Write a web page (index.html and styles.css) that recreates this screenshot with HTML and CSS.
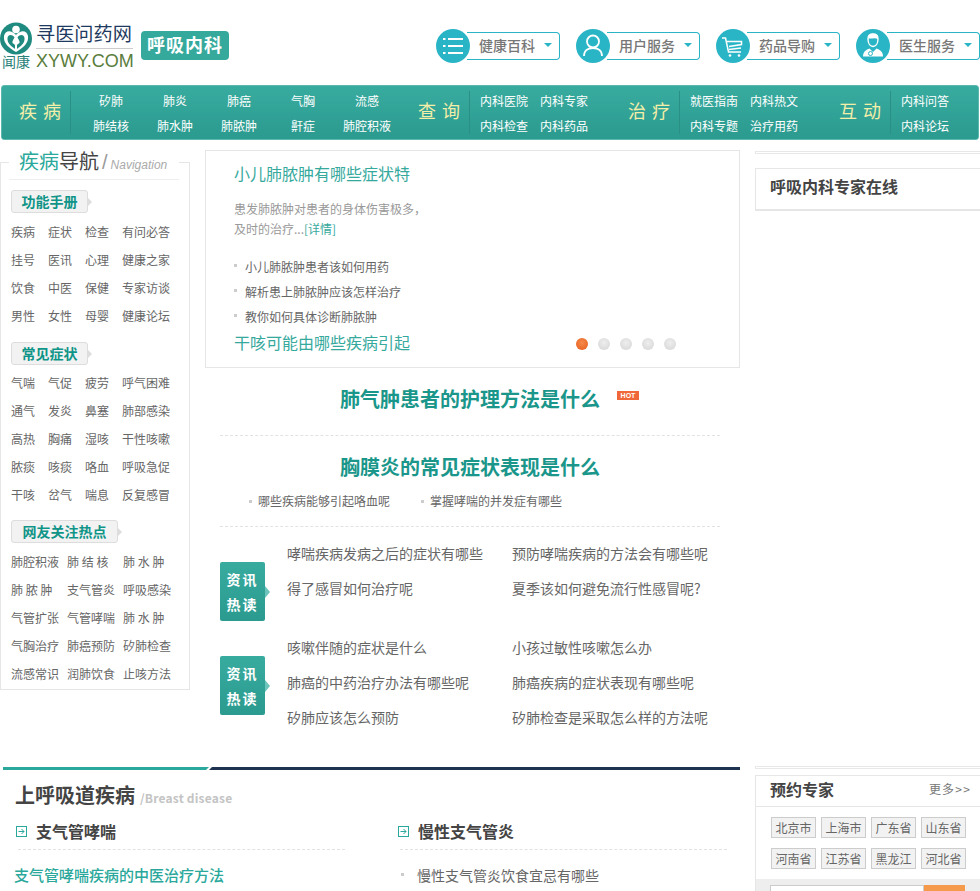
FILE: index.html
```html
<!DOCTYPE html>
<html lang="zh-CN">
<head>
<meta charset="utf-8">
<title>呼吸内科 - 寻医问药网</title>
<link rel="stylesheet" href="styles.css">
</head>
<body>
<header class="header">
  <a class="logo">
    <span class="logo-mark">
      <svg class="logo-icon" viewBox="0 0 32 33"><circle cx="16" cy="16.500" r="16" fill="#1f8a80"/><path d="M16 30C9 26 3 21 4 14C5 8.500 11 7.500 16 13C21 7.500 27 8.500 28 14C29 21 23 26 16 30Z" fill="#fff"/><path d="M15 27C11 24 7 21 7.500 16C8 12.500 12 12 14.500 15.500C13 18 12 20 12.500 21C13.500 22 14.500 22 15 23ZM17 27C21 24 25 21 24.500 16C24 12.500 20 12 17.500 15.500C19 18 20 20 19.500 21C18.500 22 17.500 22 17 23Z" fill="#1f8a80"/><circle cx="16" cy="7.500" r="3.800" fill="#fff"/></svg>
      <span class="logo-wen">闻康</span>
    </span>
    <span class="logo-text">
      <span class="logo-cn">寻医问药网</span>
      <span class="logo-en">XYWY.COM</span>
    </span>
  </a>
  <div class="badge">呼吸内科</div>
  <nav class="services">
    <a class="service">
      <span class="service-icon"><svg viewBox="0 0 34 34"><path d="M7 10h2.500M12 10h15M7 17h2.500M12 17h15M7 24h2.500M12 24h15" stroke="#fff" stroke-width="2" fill="none"/></svg></span>
      <span class="service-pill">健康百科<i class="caret"></i></span>
    </a>
    <a class="service">
      <span class="service-icon"><svg viewBox="0 0 34 34"><circle cx="17" cy="12.500" r="6" stroke="#fff" stroke-width="1.800" fill="none"/><path d="M8 27C8 21.500 12 19 17 19C22 19 26 21.500 26 27" stroke="#fff" stroke-width="1.800" fill="none"/></svg></span>
      <span class="service-pill">用户服务<i class="caret"></i></span>
    </a>
    <a class="service">
      <span class="service-icon"><svg viewBox="0 0 34 34"><path d="M6 9H9.500L12.500 23H25M10.500 12.500H25.500V15.500L13 17.500M13 20.500L25 19" stroke="#fff" stroke-width="1.500" fill="none"/><circle cx="14" cy="26.500" r="1.300" fill="#fff"/><circle cx="23" cy="26.500" r="1.300" fill="#fff"/></svg></span>
      <span class="service-pill">药品导购<i class="caret"></i></span>
    </a>
    <a class="service">
      <span class="service-icon"><svg viewBox="0 0 34 34"><path d="M12 10C12 6 14.500 5 17 5C19.500 5 22 6 22 10C22 15 19.500 17.500 17 17.500C14.500 17.500 12 15 12 10Z" fill="none" stroke="#fff" stroke-width="1.400"/><path d="M12 9.500C15 10 19 8.500 22 10L21.500 6L17 4.500L12.500 6Z" fill="#fff"/><path d="M7 27.500C7 22.500 10.500 20.500 13.500 19.500L17 23L20.500 19.500C23.500 20.500 27 22.500 27 27.500Z" fill="#fff"/><circle cx="14.500" cy="24.500" r="2" fill="none" stroke="#2ab5c6"/></svg></span>
      <span class="service-pill">医生服务<i class="caret"></i></span>
    </a>
  </nav>
</header>

<nav class="channel">
  <div class="group group-a">
    <div class="group-label">疾 病</div>
    <div class="links links-5">
      <a>矽肺</a><a>肺炎</a><a>肺癌</a><a>气胸</a><a>流感</a>
      <a>肺结核</a><a>肺水肿</a><a>肺脓肿</a><a>鼾症</a><a>肺腔积液</a>
    </div>
  </div>
  <div class="group group-b">
    <div class="group-label">查 询</div>
    <div class="links links-2">
      <a>内科医院</a><a>内科专家</a><a>内科检查</a><a>内科药品</a>
    </div>
  </div>
  <div class="group group-c">
    <div class="group-label">治 疗</div>
    <div class="links links-2">
      <a>就医指南</a><a>内科热文</a><a>内科专题</a><a>治疗用药</a>
    </div>
  </div>
  <div class="group group-d">
    <div class="group-label">互 动</div>
    <div class="links links-1">
      <a>内科问答</a><a>内科论坛</a>
    </div>
  </div>
</nav>

<main class="main">
  <aside class="side">
    <h2 class="side-title"><span class="side-teal">疾病</span>导航<span class="side-slash">/</span><em class="side-en">Navigation</em></h2>
    <div class="side-body">
      <h3 class="tag">功能手册</h3>
      <div class="side-links">
        <a>疾病</a><a>症状</a><a>检查</a><a>有问必答</a>
        <a>挂号</a><a>医讯</a><a>心理</a><a>健康之家</a>
        <a>饮食</a><a>中医</a><a>保健</a><a>专家访谈</a>
        <a>男性</a><a>女性</a><a>母婴</a><a>健康论坛</a>
      </div>
      <h3 class="tag">常见症状</h3>
      <div class="side-links side-links-5">
        <a>气喘</a><a>气促</a><a>疲劳</a><a>呼气困难</a>
        <a>通气</a><a>发炎</a><a>鼻塞</a><a>肺部感染</a>
        <a>高热</a><a>胸痛</a><a>湿咳</a><a>干性咳嗽</a>
        <a>脓痰</a><a>咳痰</a><a>咯血</a><a>呼吸急促</a>
        <a>干咳</a><a>岔气</a><a>喘息</a><a>反复感冒</a>
      </div>
      <h3 class="tag tag-wide">网友关注热点</h3>
      <div class="side-links side-links-3">
        <a>肺腔积液</a><a>肺 结 核</a><a>肺 水 肿</a>
        <a>肺 脓 肿</a><a>支气管炎</a><a>呼吸感染</a>
        <a>气管扩张</a><a>气管哮喘</a><a>肺 水 肿</a>
        <a>气胸治疗</a><a>肺癌预防</a><a>矽肺检查</a>
        <a>流感常识</a><a>润肺饮食</a><a>止咳方法</a>
      </div>
    </div>
  </aside>

  <section class="center">
    <div class="focus">
      <h3 class="focus-title">小儿肺脓肿有哪些症状特</h3>
      <p class="focus-desc">患发肺脓肿对患者的身体伤害极多，<br>及时的治疗...<a class="more">[详情]</a></p>
      <ul class="focus-list">
        <li>小儿肺脓肿患者该如何用药</li>
        <li>解析患上肺脓肿应该怎样治疗</li>
        <li>教你如何具体诊断肺脓肿</li>
      </ul>
      <div class="focus-foot">
        <h3 class="focus-title">干咳可能由哪些疾病引起</h3>
        <div class="dots"><i class="dot dot-on"></i><i class="dot"></i><i class="dot"></i><i class="dot"></i><i class="dot"></i></div>
      </div>
    </div>
    <div class="news">
      <div class="headline headline-first">
        <h2>肺气肿患者的护理方法是什么</h2><span class="hot">HOT</span>
      </div>
      <div class="headline headline-second"><h2>胸膜炎的常见症状表现是什么</h2></div>
      <div class="sublinks"><a>哪些疾病能够引起咯血呢</a><a>掌握哮喘的并发症有哪些</a></div>
      <div class="reads">
        <div class="tag-read">资讯<br>热读</div>
        <div class="read-links">
          <a>哮喘疾病发病之后的症状有哪些</a><a>预防哮喘疾病的方法会有哪些呢</a>
          <a>得了感冒如何治疗呢</a><a>夏季该如何避免流行性感冒呢?</a>
        </div>
      </div>
      <div class="reads">
        <div class="tag-read">资讯<br>热读</div>
        <div class="read-links">
          <a>咳嗽伴随的症状是什么</a><a>小孩过敏性咳嗽怎么办</a>
          <a>肺癌的中药治疗办法有哪些呢</a><a>肺癌疾病的症状表现有哪些呢</a>
          <a>矽肺应该怎么预防</a><a>矽肺检查是采取怎么样的方法呢</a>
        </div>
      </div>
    </div>
  </section>

  <aside class="right">
    <div class="thin-line"></div>
    <div class="online">呼吸内科专家在线</div>
  </aside>
</main>

<section class="lower">
  <div class="disease">
    <div class="rule"><span class="rule-teal"></span><span class="rule-navy"></span></div>
    <h2 class="disease-title">上呼吸道疾病<span class="disease-en">/Breast disease</span></h2>
    <div class="disease-cols">
      <div class="disease-col">
        <h3 class="col-title"><svg class="col-icon" viewBox="0 0 11 11"><rect x=".5" y=".5" width="10" height="10" fill="none" stroke="#2aa89b"/><path d="M2.500 5.500H8M5.500 3L8 5.500L5.500 8" fill="none" stroke="#2aa89b"/></svg>支气管哮喘</h3>
        <a class="col-lead">支气管哮喘疾病的中医治疗方法</a>
      </div>
      <div class="disease-col">
        <h3 class="col-title"><svg class="col-icon" viewBox="0 0 11 11"><rect x=".5" y=".5" width="10" height="10" fill="none" stroke="#2aa89b"/><path d="M2.500 5.500H8M5.500 3L8 5.500L5.500 8" fill="none" stroke="#2aa89b"/></svg>慢性支气管炎</h3>
        <a class="col-item">慢性支气管炎饮食宜忌有哪些</a>
      </div>
    </div>
  </div>
  <aside class="booking">
    <div class="thin-line"></div>
    <div class="book-box">
      <div class="book-head"><h3>预约专家</h3><a>更多&gt;&gt;</a></div>
      <div class="book-tags">
        <a>北京市</a><a>上海市</a><a>广东省</a><a>山东省</a>
        <a>河南省</a><a>江苏省</a><a>黑龙江</a><a>河北省</a>
      </div>
      <div class="book-search"><span class="book-input"></span><span class="book-btn"></span></div>
    </div>
  </aside>
</section>
</body>
</html>
```
FILE: styles.css
```css
* { box-sizing: border-box; }
html, body { margin: 0; padding: 0; }
body {
  width: 980px;
  height: 891px;
  overflow: hidden;
  background: #fff;
  color: #666;
  font: 12px/1.5 "Noto Sans CJK SC", "Liberation Sans", sans-serif;
}
h2, h3, p, ul { margin: 0; padding: 0; }
ul { list-style: none; }
em { font-style: italic; }

/* header */
.header { display: flex; height: 85px; }
.logo { display: flex; width: 141px; padding-top: 22px; }
.logo-mark { display: flex; flex-direction: column; align-items: center; width: 36px; padding-right: 4px; }
.logo-icon { width: 32px; height: 33px; display: block; }
.logo-wen { font-size: 14px; line-height: 16px; color: #2a7f78; margin-top: -2px; white-space: nowrap; }
.logo-text { display: flex; flex-direction: column; width: 97px; }
.logo-cn { font-size: 19.200px; line-height: 23px; color: #1e3a5f; height: 27px; border-bottom: 1px solid #ccc; white-space: nowrap; }
.logo-en { font: 18px/25px "Liberation Sans", sans-serif; color: #5a7d3c; white-space: nowrap; }
.badge {
  width: 88px; height: 29px; margin-top: 31px;
  background: #36a99d; border-radius: 4px;
  color: #fff; font-size: 18px; font-weight: 700; line-height: 27px; letter-spacing: 1px; text-align: center;
}
.services { display: flex; gap: 16px; margin-left: 207px; }
.service { display: flex; width: 124px; height: 34px; margin-top: 29px; }
.service-icon { position: relative; z-index: 1; width: 34px; height: 34px; border-radius: 50%; background: #2ab5c6; flex: none; }
.service-icon svg { display: block; width: 34px; height: 34px; }
.service-pill {
  display: flex; align-items: center;
  width: 93px; height: 28px; margin: 3px 0 0 -3px; padding: 0 0 2px 12px;
  border: 1px solid #2ab5c6; border-left: 0; border-radius: 0 4px 4px 0;
  font-size: 14px; font-weight: 500; color: #777; white-space: nowrap;
}
.caret { width: 0; height: 0; margin-left: 9px; border: 4px solid transparent; border-top-color: #2ab5c6; border-bottom: 0; }

/* channel */
.channel {
  display: flex; width: 978px; height: 55px; margin-left: 1px;
  background: linear-gradient(#38ab9f, #2b9a8f);
  border: 1px solid #5cb8ae; border-radius: 3px;
}
.group { display: flex; align-items: center; }
.group-label {
  width: 52px; height: 43px; padding-right: 8px;
  border-right: 1px solid #2a9085;
  color: #f3eea8; font-size: 18px; letter-spacing: 1px; line-height: 38px; white-space: nowrap; text-align: right;
}
.group-a { margin-left: 17px; }
.group-b { margin-left: 19px; }
.group-c { margin-left: 28px; }
.group-d { margin-left: 29px; }
.links { display: grid; color: #fff; line-height: 25px; font-size: 12px; white-space: nowrap; }
.links-5 { grid-template-columns: repeat(5, 64px); margin-left: 8px; text-align: center; }
.links-2 { grid-template-columns: 60px 60px; margin-left: 10px; }
.links-1 { grid-template-columns: 60px; margin-left: 10px; }

/* main */
.main { display: grid; grid-template-columns: 190px 535px 225px; column-gap: 15px; height: 616px; padding-top: 10px; }
.side-title {
  position: relative; z-index: 1;
  display: flex; align-items: baseline;
  width: 170px; height: 30px; margin-left: 9px; padding: 0 0 0 10px;
  background: #fff; border-bottom: 1px solid #eee;
  font-size: 20px; font-weight: 400; line-height: 21px; color: #444; white-space: nowrap;
}
.side-teal { color: #2aa89b; }
.side-slash { margin-left: 3px; font: 20px "Liberation Sans", sans-serif; color: #999; }
.side-en { margin-left: 3px; font: italic 12px "Liberation Sans", sans-serif; color: #aaa; }
.side-body { height: 528px; margin-top: -18px; padding: 27px 0 0 10px; border: 1px solid #e6e6e6; }
.tag {
  position: relative; display: block; width: 77px; height: 23px;
  background: #f2f2f2; border: 1px solid #ddd; border-radius: 3px;
  color: #0f9488; font-size: 14px; font-weight: 700; line-height: 21px; text-align: center;
}
.tag-wide { width: 107px; }
.tag::after { content: ""; position: absolute; right: -5px; top: 7px; width: 0; height: 0; border: 4px solid transparent; border-left-color: #ddd; border-right: 0; }
.side-links { display: grid; grid-template-columns: 37px 37px 37px 60px; line-height: 28px; margin: 5px 0 12px; color: #666; white-space: nowrap; }
.side-links-5 { margin: 4px 0 11px; }
.side-links-3 { grid-template-columns: 56px 56px 56px; }

.center { min-width: 0; }
.focus { height: 218px; padding: 11px 28px 0; border: 1px solid #e6e6e6; }
.focus-title { font-size: 16px; font-weight: 400; line-height: 22px; color: #36a99d; white-space: nowrap; }
.focus-desc { margin-top: 15px; color: #999; line-height: 20px; }
.more { color: #36a99d; }
.focus-list { margin-top: 15px; line-height: 25px; color: #666; }
.focus-list li { position: relative; padding-left: 11px; }
.focus-list li::before { content: ""; position: absolute; left: 0; top: 10px; width: 3px; height: 3px; background: #ccc; }
.focus-foot { display: flex; align-items: center; justify-content: space-between; height: 22px; margin-top: 2px; }
.dots { display: flex; gap: 10px; margin: 3px 35px 0 0; }
.dot { width: 12px; height: 12px; border-radius: 50%; background: radial-gradient(circle at 50% 40%, #eee, #d4d4d4); }
.dot-on { background: radial-gradient(circle at 50% 40%, #f58a4a, #e65c1c); }

.news { padding: 0 20px 0 15px; }
.headline { display: flex; align-items: flex-start; padding-left: 120px; height: 68px; border-bottom: 1px dashed #e2e2e2; }
.headline h2 { font-size: 20px; font-weight: 700; line-height: 30px; color: #1a968a; white-space: nowrap; }
.headline-first h2 { margin-top: 16px; }
.headline-second { height: 31px; border: 0; margin-top: 16px; }
.hot { width: 22px; height: 9px; margin: 23px 0 0 17px; background: #f0683a; color: #fff; font: 700 7px/9px "Liberation Sans", sans-serif; text-align: center; }
.sublinks { display: flex; height: 44px; padding: 9px 0 0 29px; border-bottom: 1px dashed #e2e2e2; color: #666; line-height: 18px; }
.sublinks a { position: relative; width: 172px; padding-left: 9px; }
.sublinks a::before { content: ""; position: absolute; left: 0; top: 8px; width: 3px; height: 3px; background: #ccc; }
.reads { display: flex; align-items: flex-start; margin-top: 9px; }
.tag-read {
  position: relative; width: 45px; height: 59px; margin-top: 26px; flex: none;
  background: linear-gradient(#38ab9f, #2b9a8f); border-radius: 2px;
  color: #fff; font-size: 14px; font-weight: 700; letter-spacing: 2px; line-height: 25px; text-align: center; padding-top: 5px;
}
.tag-read::after { content: ""; position: absolute; right: -5px; top: 24px; width: 0; height: 0; border: 6px solid transparent; border-left: 5px solid #6cc4bb; border-right: 0; }
.read-links { display: grid; grid-template-columns: 225px 225px; align-content: start; margin-left: 22px; font-size: 14px; line-height: 35px; color: #666; white-space: nowrap; }

.thin-line { height: 3px; border: 1px solid #e8e8e8; border-right: 0; }
.right .thin-line { margin-top: 1px; }
.online {
  height: 43px; margin-top: 14px; padding-left: 14px;
  border: 1px solid #e6e6e6; border-bottom-width: 2px; border-right: 0;
  color: #444; font-size: 16px; font-weight: 700; line-height: 35px;
}

/* lower */
.lower { display: grid; grid-template-columns: 737px 225px; column-gap: 15px; margin-left: 3px; }
.disease { padding-top: 11px; }
.rule { display: flex; height: 3px; }
.rule-teal { width: 206px; background: #2aa89b; clip-path: polygon(0 0, 100% 0, calc(100% - 3px) 100%, 0 100%); }
.rule-navy { flex: 1; background: #1d3350; clip-path: polygon(3px 0, 100% 0, 100% 100%, 0 100%); }
.disease-title { margin: 12px 0 0 12px; font-size: 20px; font-weight: 700; line-height: 25px; color: #444; white-space: nowrap; }
.disease-en { margin-left: 5px; font-size: 12px; letter-spacing: .2px; color: #c4c4c4; }
.disease-cols { display: flex; margin-top: 9px; }
.disease-col { flex: none; width: 382px; padding-left: 12px; }
.col-title { position: relative; display: flex; align-items: center; width: 330px; height: 31px; padding-bottom: 7px; color: #444; font-size: 16px; line-height: 24px; }
.col-title::after { content: ""; position: absolute; left: 3px; right: 0; bottom: 0; border-bottom: 1px dashed #e2e2e2; }
.col-icon { width: 11px; height: 11px; margin: 0 9px 0 1px; flex: none; }
.col-lead { display: block; margin: 13px 0 0 -1px; color: #2aa89b; font-size: 15px; font-weight: 500; line-height: 24px; white-space: nowrap; }
.col-item { position: relative; display: block; margin: 13px 0 0 20px; font-size: 14px; line-height: 24px; color: #666; white-space: nowrap; }
.col-item::before { content: ""; position: absolute; left: -16px; top: 10px; width: 3px; height: 3px; background: #ccc; }

.booking { padding-top: 10px; }
.booking .thin-line { margin-bottom: 6px; }
.book-box { border: 1px solid #e6e6e6; border-right: 0; }
.book-head { display: flex; align-items: center; justify-content: space-between; height: 31px; padding: 0 9px 4px 14px; border-bottom: 1px solid #e6e6e6; }
.book-head h3 { font-size: 16px; color: #444; line-height: 24px; }
.book-head a { color: #777; font-size: 12px; letter-spacing: 1.200px; }
.book-tags { display: grid; grid-template-columns: repeat(4, 45px); gap: 10px 5px; padding: 10px 0 10px 15px; }
.book-tags a { height: 21px; background: #f2f2f2; border: 1px solid #ccc; color: #666; line-height: 19px; text-align: center; white-space: nowrap; }
.book-search { display: flex; height: 20px; padding: 6px 0 0 14px; background: #eee; }
.book-input { width: 154px; height: 20px; background: #fff; border: 1px solid #ccc; }
.book-btn { width: 41px; height: 20px; background: #f59a4b; }
```
